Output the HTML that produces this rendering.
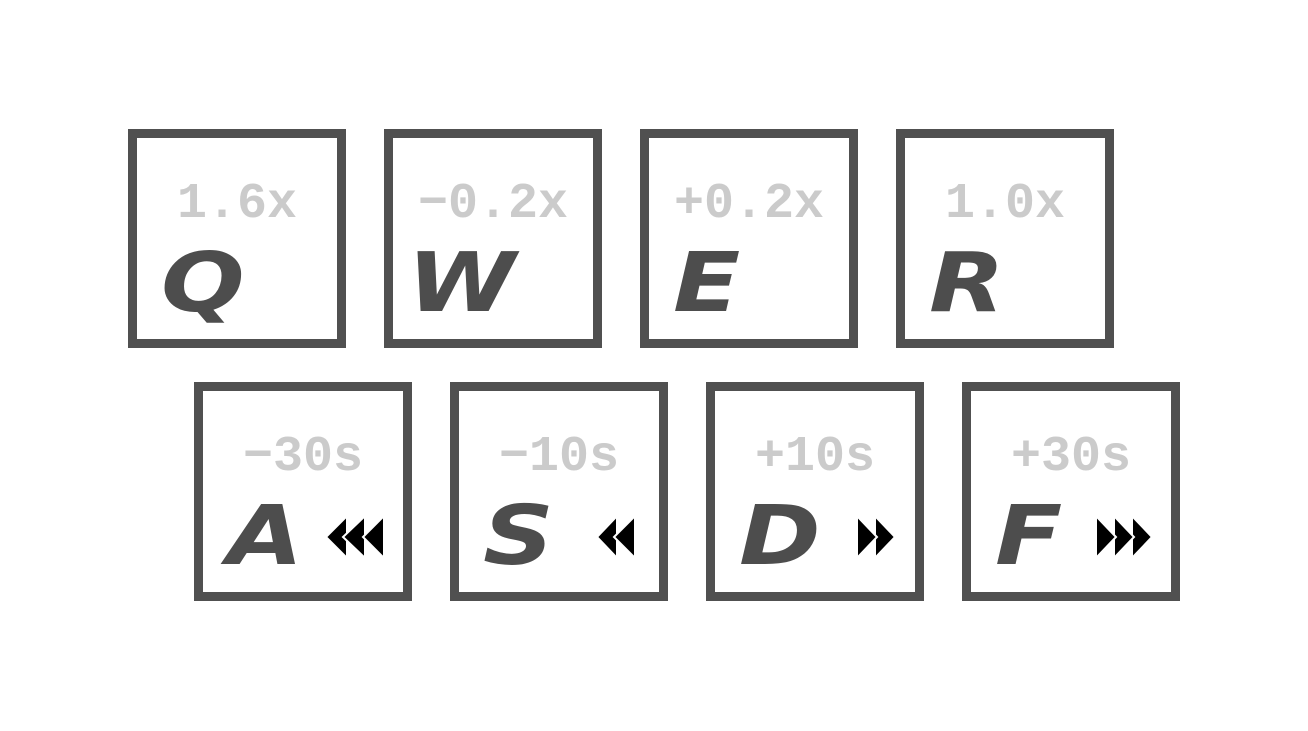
<!DOCTYPE html>
<html><head><style>
body{margin:0;width:1308px;height:731px;background:#fff;position:relative;overflow:hidden}
.k{position:absolute;width:200px;height:201px;border:9px solid #505050;}
.l{position:absolute;left:0;width:200px;text-align:center;top:37px;font:bold 50px "Liberation Mono",monospace;color:#cbcbcb;line-height:60px}
.c{position:absolute;left:24px;top:96px;font:bold oblique 82px "DejaVu Sans","Liberation Sans",sans-serif;color:#4d4d4d;line-height:100px;transform:scaleX(1.2);transform-origin:0 0;letter-spacing:-2px}
svg{position:absolute}
</style></head><body>
<div class="k" style="left:128px;top:129px"><div class="l">1.6x</div><div class="c">Q</div></div>
<div class="k" style="left:384px;top:129px"><div class="l">−0.2x</div><div class="c" style="left:14px">W</div></div>
<div class="k" style="left:640px;top:129px"><div class="l">+0.2x</div><div class="c">E</div></div>
<div class="k" style="left:896px;top:129px"><div class="l">1.0x</div><div class="c">R</div></div>

<div class="k" style="left:194px;top:382px"><div class="l">−30s</div><div class="c">A</div>
<svg style="left:122px;top:124px" width="62" height="46" viewBox="0 0 62 46"><g stroke="#fff" stroke-width="2"><path d="M22 1L1 22L22 43Z" fill="#000"/><path d="M40 1L18 22L40 43Z" fill="#000"/><path d="M59 1L38 22L59 43Z" fill="#000"/></g></svg></div>
<div class="k" style="left:450px;top:382px"><div class="l">−10s</div><div class="c">S</div>
<svg style="left:137px;top:124px" width="42" height="46" viewBox="0 0 42 46"><g stroke="#fff" stroke-width="2"><path d="M21 1L1 22L21 43Z" fill="#000"/><path d="M39 1L18 22L39 43Z" fill="#000"/></g></svg></div>
<div class="k" style="left:706px;top:382px"><div class="l">+10s</div><div class="c">D</div>
<svg style="left:140px;top:124px" width="42" height="46" viewBox="0 0 42 46"><g stroke="#fff" stroke-width="2"><path d="M20 1L40 22L20 43Z" fill="#000"/><path d="M2 1L22 22L2 43Z" fill="#000"/></g></svg></div>
<div class="k" style="left:962px;top:382px"><div class="l">+30s</div><div class="c">F</div>
<svg style="left:123px;top:124px" width="60" height="46" viewBox="0 0 60 46"><g stroke="#fff" stroke-width="2"><path d="M38 1L58 22L38 43Z" fill="#000"/><path d="M20 1L40 22L20 43Z" fill="#000"/><path d="M2 1L22 22L2 43Z" fill="#000"/></g></svg></div>
</body></html>
